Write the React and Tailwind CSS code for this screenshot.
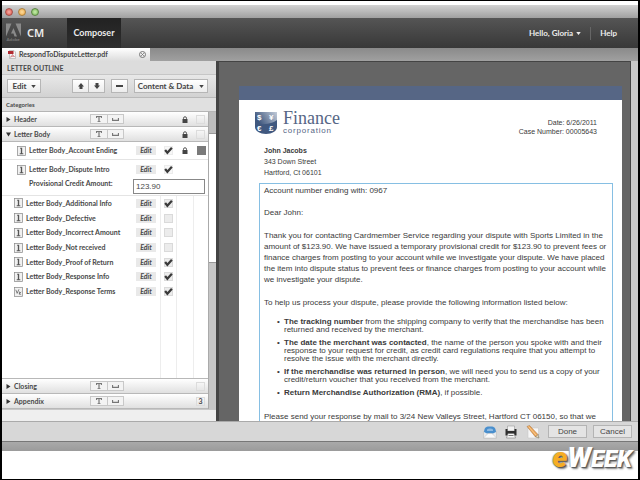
import React, { useState } from 'react';

const letterItems = [
  { id: 'additional', name: 'Letter Body_Additional Info', checked: true },
  { id: 'defective', name: 'Letter Body_Defective', checked: false },
  { id: 'incorrect', name: 'Letter Body_Incorrect Amount', checked: false },
  { id: 'notreceived', name: 'Letter Body_Not received', checked: false },
  { id: 'proof', name: 'Letter Body_Proof of Return', checked: true },
  { id: 'info', name: 'Letter Body_Response Info', checked: true },
  { id: 'terms', name: 'Letter Body_Response Terms', checked: true, fraction: true },
];

const Caret = () => (
  <svg viewBox="0 0 6 4" className="h-[3px] w-[5px] shrink-0" fill="currentColor">
    <path d="M0 0h6L3 4z" />
  </svg>
);

const Arrow = ({ down }) => (
  <svg viewBox="0 0 12 12" className={`h-[6px] w-[6px] ${down ? 'rotate-180' : ''}`} fill="currentColor">
    <path d="M6 0l6 7H9v5H3V7H0z" />
  </svg>
);

const TextIcon = ({ fraction }) => (
  <svg viewBox="0 0 20 22" className="h-[10px] w-[9px] shrink-0">
    <rect x="1" y="1" width="18" height="20" fill="#f1f1f1" stroke="#8a8a8a" strokeWidth="1.6" />
    {fraction ? (
      <path d="M4 6l3 8 4-9M12 10v7M12 14l4-3M12 14l4 3" fill="none" stroke="#666" strokeWidth="1.8" />
    ) : (
      <path d="M7 4h4.500v12H14v2H6v-2h2.500V6H7z" fill="#555" />
    )}
  </svg>
);

const PadLock = () => (
  <svg viewBox="0 0 12 14" className="h-[7px] w-[6px]">
    <path d="M3 7V4.500a3 3 0 0 1 6 0V7" fill="none" stroke="#555" strokeWidth="2" />
    <path d="M1 6h10v8H1z" fill="#444" />
  </svg>
);

const InsertButtons = () => (
  <div className="flex h-[10px] w-[34px] border border-[#c8c8c8] bg-[#f3f3f3] text-[#777]">
    <button aria-label="Insert text" className="flex flex-1 items-center justify-center border-r border-[#c8c8c8]">
      <svg viewBox="0 0 12 12" className="h-[6px] w-[6px]" fill="currentColor">
        <path d="M0 0h12v4h-1.500L9 2H7.200v8.500H9V12H3v-1.500h1.800V2H3L1.500 4H0z" />
      </svg>
    </button>
    <button aria-label="Insert space" className="flex flex-1 items-center justify-center">
      <svg viewBox="0 0 14 6" className="h-[3px] w-[7px]" fill="none" stroke="currentColor" strokeWidth="2.500">
        <path d="M1 0v4.500h12V0" />
      </svg>
    </button>
  </div>
);

const SectionRow = ({ title, open, locked, count }) => (
  <div className="flex h-[15px] items-center border-b border-[#b8b8b8] bg-linear-to-b from-white to-[#e0e0e0]">
    <button className="flex w-[88px] items-center gap-[3px] pl-1">
      <svg viewBox="0 0 10 10" className="h-[5px] w-[5px]" fill="#333">
        {open ? <path d="M0 1h10L5 9z" /> : <path d="M1 0l8 5-8 5z" />}
      </svg>
      {title}
    </button>
    <InsertButtons />
    <span className="ml-auto flex w-4 justify-center">{locked && <PadLock />}</span>
    <span className="mr-[3px] ml-[3px] flex h-[9px] w-[9px] items-center justify-center border border-[#dcdcdc]">
      {count}
    </span>
  </div>
);

const ItemCheck = ({ label, checked, onChange, plain }) => (
  <span className="relative flex h-[9px] w-[9px]">
    <input
      type="checkbox"
      aria-label={label}
      checked={checked}
      onChange={onChange}
      className={`h-[9px] w-[9px] appearance-none border ${plain ? 'border-[#ececec] bg-[#f7f7f7]' : 'border-[#dadada] bg-[#ececec]'}`}
    />
    {checked && (
      <svg viewBox="0 0 16 16" className="pointer-events-none absolute inset-0 h-[9px] w-[9px]" fill="none" stroke="#3a3a3a" strokeWidth="4">
        <path d="M2 7l4 5 8-9" />
      </svg>
    )}
  </span>
);

const ItemCells = ({ lines, check, lock, mark }) => {
  const line = lines ? 'border-[#ededed]' : 'border-transparent';
  return (
    <div className="ml-auto flex self-stretch">
      <span className={`flex w-[16px] items-center justify-center border-l ${line}`}>{check}</span>
      <span className={`flex w-[17px] items-center justify-center border-l ${line}`}>{lock}</span>
      <span className={`flex w-[15px] items-center justify-center border-l ${line}`}>{mark}</span>
    </div>
  );
};

const ItemRow = ({ name, checked, fraction, onChange, nested, locked }) => (
  <div className={`flex items-center ${nested ? 'h-[17px] pl-[15px]' : 'flex-1 pl-3'}`}>
    <TextIcon fraction={fraction} />
    <span className={`ml-[3px] whitespace-nowrap ${nested ? 'w-[107px]' : 'w-[110px]'}`}>{name}</span>
    <button className="h-[9px] w-[20px] bg-[#e9e9e9] leading-[9px] italic">Edit</button>
    <ItemCells
      lines={!nested}
      check={<ItemCheck label={name} checked={checked} onChange={onChange} plain={nested} />}
      lock={locked && <PadLock />}
      mark={locked && <span className="h-[9px] w-[9px] bg-[#7a7a7a]" />}
    />
  </div>
);

const toolButton =
  'flex h-[14px] items-center justify-center border border-[#b6b6b6] bg-linear-to-b from-white to-[#ececec] text-[8px] leading-[12px] whitespace-nowrap text-[#444]';

const Sidebar = () => {
  const [items, setItems] = useState(letterItems);
  const [intro, setIntro] = useState(true);
  const [ending, setEnding] = useState(true);
  const [amount, setAmount] = useState('123.90');

  const toggle = (id) => {
    setItems(items.map((item) => (item.id === id ? { ...item, checked: !item.checked } : item)));
  };

  return (
    <aside className="flex w-[214px] shrink-0 flex-col bg-[#efefef] text-[7px] leading-[9px] font-bold text-[#484848]">
      <h2 className="h-[14px] border-b border-[#c6c6c6] bg-[#dcdcdc] pl-[5px] leading-[15px]">LETTER OUTLINE</h2>
      <div className="flex h-[23px] items-center border-b border-[#b9b9b9] bg-linear-to-b from-[#e8e8e8] to-[#d2d2d2] pr-[8px] pl-[5px]">
        <button className={`${toolButton} w-[34px] gap-1`}>Edit <Caret /></button>
        <div className="ml-[31px] flex">
          <button aria-label="Move up" className={`${toolButton} w-[17px]`}><Arrow /></button>
          <button aria-label="Move down" className={`${toolButton} w-[16px] border-l-0`}><Arrow down /></button>
        </div>
        <button aria-label="Remove" className={`${toolButton} ml-[6px] w-[17px]`}>
          <span className="h-[2px] w-[7px] bg-[#444]" />
        </button>
        <button className={`${toolButton} ml-auto w-[74px] gap-[6px]`}>Content &amp; Data <Caret /></button>
      </div>
      <div className="h-[14px] border-b border-[#b5b5b5] bg-[#e0e0e0] pl-1 text-[6px] leading-[14px]">Categories</div>
      <div className="flex min-h-0 grow">
        <div className="flex min-w-0 grow flex-col bg-white">
          <SectionRow title="Header" locked />
          <SectionRow title="Letter Body" open locked />
          <div className="border-b border-[#e4e4e4]">
            <ItemRow name="Letter Body_Account Ending" checked={ending} onChange={() => setEnding(!ending)} nested locked />
          </div>
          <div className="border-b border-[#e4e4e4] pt-px pb-px">
            <ItemRow name="Letter Body_Dispute Intro" checked={intro} onChange={() => setIntro(!intro)} nested />
            <div className="flex items-start pt-px pl-[27px]">
              <label htmlFor="amount" className="w-[104px]">Provisional Credit Amount:</label>
              <input
                id="amount"
                value={amount}
                onChange={(e) => setAmount(e.target.value)}
                className="h-[15px] w-[72px] border border-[#888] bg-white px-[2px] font-['Liberation_Sans',sans-serif] text-[8px] font-normal"
              />
            </div>
          </div>
          <div className="flex h-[103px] flex-col">
            {items.map((item) => (
              <ItemRow key={item.id} {...item} onChange={() => toggle(item.id)} />
            ))}
          </div>
          <div className="flex grow">
            <ItemCells lines />
          </div>
          <div className="border-t border-[#b8b8b8]">
            <SectionRow title="Closing" />
            <SectionRow title="Appendix" count={3} />
          </div>
        </div>
        <div className="flex w-[8px] flex-col border-l border-[#aaa] bg-[#c6c6c6]">
          <div className="h-[22px] border-b border-[#999] bg-[#bdbdbd]" />
          <div className="h-[129px] border-b border-[#999] bg-white" />
        </div>
      </div>
      <div className="h-[12px] border-t border-[#c8c8c8]" />
    </aside>
  );
};

const FinanceLogo = () => (
  <svg viewBox="0 0 22 24" className="mt-[2px] h-[24px] w-[22px]">
    <defs>
      <linearGradient id="shield" x1="0" y1="0.4" x2="1" y2="0">
        <stop offset="0" stopColor="#40587f" />
        <stop offset="1" stopColor="#c3ccd9" />
      </linearGradient>
    </defs>
    <path d="M0 1h22v15c0 4-5 7-11 7S0 20 0 16z" fill="#40587f" />
    <path d="M0 1h22v8c-5 4-14 5-22 4z" fill="url(#shield)" />
    <g fill="#fff" fontFamily="Liberation Sans, sans-serif" fontWeight="bold" fontSize="8">
      <text x="2" y="9">$</text>
      <text x="14" y="9">¥</text>
      <text x="2" y="20">€</text>
      <text x="14" y="20">£</text>
    </g>
  </svg>
);

const bullet = "before:-ml-[7px] before:inline-block before:w-[7px] before:content-['•']";

const Letter = () => (
  <article className="h-full overflow-hidden border-t-[14px] border-[#566685] bg-white font-['Liberation_Sans',sans-serif] text-[8px] leading-[11px] text-[#3a3a3a]">
    <header className="flex items-start justify-between pt-[9px] pr-[25px] pl-[16px]">
      <div className="flex items-start gap-[6px]">
        <FinanceLogo />
        <div className="text-[#566685]">
          <div className="font-['Liberation_Serif',serif] text-[18px] leading-[18px]">Finance</div>
          <div className="font-['Liberation_Sans',sans-serif] text-[8px] leading-[8px] tracking-widest">corporation</div>
        </div>
      </div>
      <div className="pt-[9px] text-right text-[7px] leading-[9px]">
        <div>Date: 6/26/2011</div>
        <div>Case Number: 00005643</div>
      </div>
    </header>
    <address className="mt-[9px] pl-[25px] text-[7px] leading-[11px] not-italic">
      <div className="font-bold">John Jacobs</div>
      <div>343 Down Street</div>
      <div>Hartford, Ct 06101</div>
    </address>
    <div className="mt-[5px] mr-[9px] ml-[20px] h-full border border-[#86bfe3] px-[4px] whitespace-nowrap">
      <p className="leading-[13px]">Account number ending with: 0967</p>
      <p className="mt-[10px]">Dear John:</p>
      <p className="mt-[12px]">
        Thank you for contacting Cardmember Service regarding your dispute with Sports Limited in the<br />
        amount of $123.90. We have issued a temporary provisional credit for $123.90 to prevent fees or<br />
        finance charges from posting to your account while we investigate your dispute. We have placed<br />
        the item into dispute status to prevent fees or finance charges from posting to your account while<br />
        we investigate your dispute.
      </p>
      <p className="mt-[12px]">To help us process your dispute, please provide the following information listed below:</p>
      <ul className="mt-[10px] ml-[20px] list-none space-y-[5px] leading-[8px]">
        <li className={bullet}>
          <b>The tracking number</b> from the shipping company to verify that the merchandise has been<br />
          returned and received by the merchant.
        </li>
        <li className={bullet}>
          <b>The date the merchant was contacted</b>, the name of the person you spoke with and their<br />
          response to your request for credit, as credit card regulations require that you attempt to<br />
          resolve the issue with the merchant directly.
        </li>
        <li className={bullet}>
          <b>If the merchandise was returned in person</b>, we will need you to send us a copy of your<br />
          credit/return voucher that you received from the merchant.
        </li>
        <li className={bullet}>
          <b>Return Merchandise Authorization (RMA)</b>, if possible.
        </li>
      </ul>
      <p className="mt-[14px]">Please send your response by mail to 3/24 New Valleys Street, Hartford CT 06150, so that we</p>
    </div>
  </article>
);

const App = () => {
  return (
    <div className="flex h-screen flex-col border-x-2 border-y border-black bg-white font-['Lato',sans-serif]">
      <div className="mt-1 flex h-[13px] shrink-0 items-center gap-[5px] bg-linear-to-b from-[#d2d2d2] to-[#a0a0a0] pl-[3px]">
        <span className="h-[8px] w-[8px] rounded-full border border-[#a4504a] bg-radial from-[#f6b0a8] to-[#d8453f]" />
        <span className="h-[8px] w-[8px] rounded-full border border-[#a9803f] bg-radial from-[#fbdc9c] to-[#eea63c]" />
        <span className="h-[8px] w-[8px] rounded-full border border-[#5c8344] bg-radial from-[#c9ecac] to-[#74b651]" />
      </div>
      <nav className="flex h-[30px] shrink-0 items-center bg-linear-to-b from-[#555] to-[#383838] text-[8px] font-bold text-[#ececec]">
        <svg viewBox="0 0 30 40" className="ml-1 h-[20px] w-[15px]">
          <path d="M19 1h11v26zM11 1H0v26zM15 10l7 17h-5l-2-6h-5z" fill="#8a8a8a" />
          <text x="1" y="36" fontSize="9" fill="#777" fontWeight="bold">Adobe</text>
        </svg>
        <span className="ml-[6px] w-[40px] font-['Noto_Sans',sans-serif] text-[11px] font-semibold">CM</span>
        <a href="#composer" className="flex h-full w-[54px] items-center justify-center bg-linear-to-b from-[#222] to-[#2e2e2e] text-[9px]">
          Composer
        </a>
        <button className="ml-auto flex items-center gap-[3px]">Hello, Gloria <Caret /></button>
        <span className="mx-[9px] h-[13px] w-px bg-[#666]" />
        <a href="#help" className="mr-[21px]">Help</a>
      </nav>
      <div className="flex h-[13px] shrink-0 bg-linear-to-b from-[#8a8a8a] to-[#a0a0a0]">
        <div className="flex w-[148px] items-center bg-linear-to-b from-white to-[#dcdcdc] pr-[4px] pl-[6px] text-[7px] font-bold text-[#444]">
          <svg viewBox="0 0 16 18" className="mr-[3px] h-[9px] w-[8px]">
            <path d="M3 1h9l3 3v13H3z" fill="#f4f4f4" stroke="#999" />
            <path d="M0 2h11v6H0z" fill="#b02a30" />
            <path d="M5 14c3-2 4-5 4-5s1 3 4 4c-3-1-5 0-8 1z" fill="none" stroke="#b02a30" />
          </svg>
          <span className="grow">RespondToDisputeLetter.pdf</span>
          <button aria-label="Close" className="h-[7px] w-[7px]">
            <svg viewBox="0 0 14 14" fill="none" stroke="#777" strokeWidth="2">
              <circle cx="7" cy="7" r="6" />
              <path d="M4.500 4.500l5 5M9.500 4.500l-5 5" />
            </svg>
          </button>
        </div>
      </div>
      <div className="flex min-h-0 flex-1">
        <Sidebar />
        <main className="min-w-0 grow overflow-hidden border-t border-r border-l-[3px] border-[#444] bg-[#656565] pt-[24px] pr-[8px] pl-[20px]">
          <Letter />
        </main>
        <div className="w-[7px] bg-[#c9c9c9]" />
      </div>
      <footer className="flex h-[20px] shrink-0 items-center justify-end border-t border-[#aaa] bg-[#d7d7d7] pr-[6px] font-['Liberation_Sans',sans-serif] text-[8px] text-[#444]">
        <button aria-label="Email" className="mr-[7px]">
          <svg viewBox="0 0 28 28" className="h-[14px] w-[14px]">
            <path d="M1 13h26v13H1z" fill="#e8eaec" stroke="#b4b4b4" />
            <path d="M2 14C3 3 8 3 14 3s11 0 12 11l-6 3H8z" fill="#4a8fcd" />
            <path d="M8 9c3-3 9-3 12 0v3H8z" fill="#8fbbe2" />
            <path d="M1 26l9-9h8l9 9z" fill="#fafafa" stroke="#bbb" />
          </svg>
        </button>
        <button aria-label="Print" className="mr-[8px]">
          <svg viewBox="0 0 28 28" className="h-[14px] w-[14px]">
            <path d="M7 2h14v10H7z" fill="#f2f2f2" stroke="#888" />
            <path d="M3 8h4v4h14V8h4v13H3z" fill="#2e2e2e" />
            <path d="M8 17h12l3 9H5z" fill="#f6f6f6" stroke="#666" />
            <path d="M9 21h10" stroke="#777" strokeWidth="2" />
          </svg>
        </button>
        <button aria-label="Edit letter" className="mr-[8px]">
          <svg viewBox="0 0 28 28" className="h-[14px] w-[14px]">
            <path d="M4 6h21v20H4z" fill="#f6f6f6" stroke="#c2c2c2" />
            <path d="M2 3l5-2 17 18-5 5z" fill="#eda556" stroke="#a56f3a" />
            <path d="M5 3l16 18" stroke="#fbd9a8" strokeWidth="1.500" />
            <path d="M24 19l2 7-7-2z" fill="#eed9b8" stroke="#665" />
          </svg>
        </button>
        <button className="h-[13px] w-[39px] border border-[#b4b4b4] bg-[#e4e4e4]">Done</button>
        <button className="ml-[6px] h-[13px] w-[39px] border border-[#b4b4b4] bg-[#e4e4e4]">Cancel</button>
      </footer>
      <div className="h-[10px] shrink-0 border-t border-[#777] bg-linear-to-b from-[#a9a9a9] to-[#9b9b9b]" />
      <div className="relative h-[28px] shrink-0">
        <div className="absolute -top-[7px] right-[6px] flex items-baseline font-['Roboto',sans-serif] text-[24px] leading-[28px] font-black text-white italic [text-shadow:1px_1px_1px_#555,-1px_0_1px_#aaa,2px_2px_2px_#888]">
          <span className="text-[28px] text-[#f6ad24]">e</span>
          <span className="text-[28px]">W</span>
          <span>EEK</span>
        </div>
      </div>
    </div>
  );
};

export default App;
